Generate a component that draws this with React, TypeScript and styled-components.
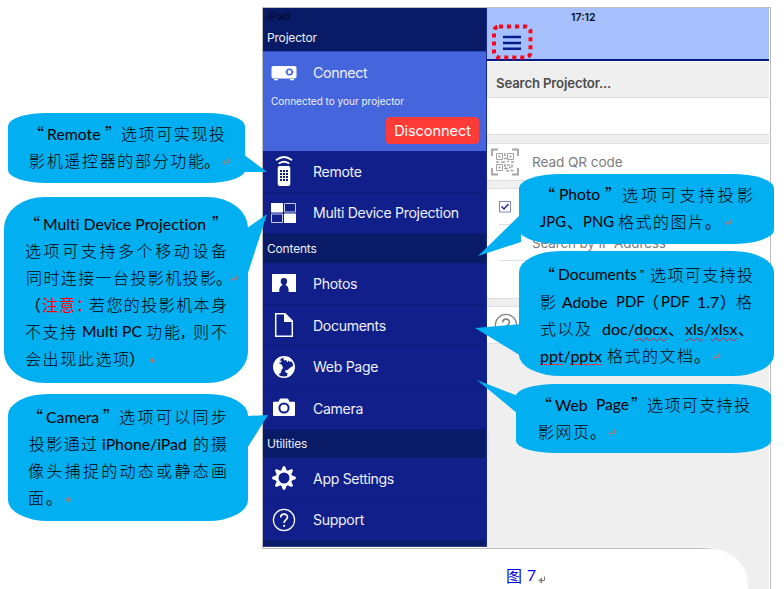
import React from "react";
import styled, { createGlobalStyle } from "styled-components";

const GlobalStyle = createGlobalStyle`
  * { box-sizing: border-box; }
  body { margin: 0; background: #fff; }
`;

const ui = `Inter, "Liberation Sans", sans-serif`;
const cjk = `"Noto Sans CJK SC", sans-serif`;
const latin = `Lato, "Noto Sans CJK SC", sans-serif`;

const Page = styled.main`
  position: relative;
  width: 784px;
  height: 589px;
  overflow: hidden;
  background: #fff;
  padding: 7px 0 0 262px;
  font-family: ${ui};
`;

const Frame = styled.div`
  width: 509px;
  height: 582px;
  display: flex;
  border: solid #bcbcbc;
  border-width: 1px 1px 0 1px;
  padding-right: 1px;
`;

const Sidebar = styled.nav`
  width: 224px;
  height: 539px;
  flex: none;
  overflow: hidden;
  background: #091a66;
  border-right: 1px solid #16289a;
  color: #eef0fb;
`;

const Status = styled.div`
  height: 18px;
  padding: 1px 0 0 5px;
  font-size: 10.5px;
  line-height: 16px;
  color: #02061c;
`;

const Section = styled.div<{ $h: number; $lift?: number }>`
  height: ${(p) => p.$h}px;
  padding: 0 0 ${(p) => p.$lift ?? 0}px 4px;
  display: flex;
  align-items: center;
  font-size: 12px;
  letter-spacing: -0.18px;
`;

const ConnectCard = styled.section`
  height: 100px;
  border-top: 1px solid #2b45b4;
  background: #4565dc;
  display: flex;
  flex-direction: column;
`;

const ConnectTitle = styled.div`
  height: 40px;
  display: flex;
  align-items: center;
  font-size: 14.3px;
  letter-spacing: -0.4px;
`;

const ConnectNote = styled.div`
  height: 18px;
  padding-left: 8px;
  line-height: 18px;
  font-size: 10px;
  white-space: nowrap;
`;

const Disconnect = styled.button`
  align-self: flex-end;
  width: 93px;
  height: 27px;
  margin: 7px 7px 0 0;
  padding: 0;
  border: 0;
  border-radius: 4px;
  background: #ff3b38;
  color: #fff;
  font: 14.6px ${ui};
  letter-spacing: -0.1px;
`;

const Row = styled.div`
  height: 41.6px;
  display: flex;
  align-items: center;
  background: #101f8a;
  border-bottom: 1px solid #0c1b78;
  font-size: 14.1px;
  letter-spacing: -0.33px;
  white-space: nowrap;
`;

const IconBox = styled.span`
  width: 50px;
  flex: none;
  display: flex;
  padding-left: 5px;
  svg { display: block; }
`;

const Panel = styled.section`
  flex: 1;
  background: #efefef;
  color: #7d7d7d;
`;

const TopBar = styled.header`
  height: 53px;
  background: #a6c0fd;
  border-bottom: 2px solid #061a84;
  color: #0a0f24;
`;

const Clock = styled.div`
  padding: 3px 0 0 84px;
  font-size: 10.5px;
  line-height: 13px;
  font-weight: 600;
`;

const MenuIcon = styled.div`
  padding-left: 4px;
  svg { display: block; }
`;

const Heading = styled.h1`
  margin: 0;
  height: 37px;
  padding: 6px 0 0 9px;
  border-top: 1px solid #fff;
  line-height: 30px;
  font-size: 13.2px;
  letter-spacing: -0.16px;
  font-weight: 600;
  color: #4c4c4c;
`;

const Cell = styled.div<{ $h: number; $gap?: number }>`
  height: ${(p) => p.$h}px;
  margin-bottom: ${(p) => p.$gap ?? 0}px;
  display: flex;
  align-items: center;
  background: #fff;
  box-shadow: 0 0 0 1px #dfdfdf;
  clip-path: inset(-1px 0);
  padding-left: 3px;
  font-size: 13.6px;
  letter-spacing: -0.08px;
  svg { flex: none; }
`;

const CellText = styled.span`
  padding-left: 12px;
`;

const SearchGroup = styled.div`
  height: 109px;
  margin-bottom: 9px;
  background: #fff;
  box-shadow: 0 0 0 1px #dfdfdf;
  clip-path: inset(-1px 0);
`;

const CheckRow = styled.div`
  height: 36px;
  margin-left: 12px;
  padding-top: 12px;
  border-bottom: 1px solid #e0e0e0;
  svg { display: block; }
`;

const IpRow = styled(CheckRow)`
  padding: 8px 0 0 33px;
  line-height: 20px;
  font-size: 13.4px;
  letter-spacing: -0.1px;
`;

const Caption = styled.footer`
  position: absolute;
  left: 262px;
  top: 548px;
  width: 485px;
  height: 60px;
  padding: 17px 0 0 244px;
  background: #fff;
  border-top-right-radius: 42px 36px;
  box-shadow: 1px 0 3px #fff;
  color: #0000e6;
  display: flex;
  font: 16px/20px ${cjk};
  &::before {
    content: "";
    position: absolute;
    left: 0;
    top: 0;
    width: 454px;
    height: 1px;
    background: linear-gradient(90deg, #bcbcbc 97%, #efefef);
  }
`;

const CaptionNumber = styled.span`
  padding-left: 5px;
  font-family: Lato, sans-serif;
  font-size: 15.5px;
`;

const Bubble = styled.aside<{ $x: number; $y: number; $w: number; $h: number; $rx: number; $ry: number; $top: number }>`
  position: absolute;
  left: ${(p) => p.$x}px;
  top: ${(p) => p.$y}px;
  width: ${(p) => p.$w}px;
  height: ${(p) => p.$h}px;
  border-radius: ${(p) => p.$rx}px / ${(p) => p.$ry}px;
  padding-top: ${(p) => p.$top}px;
  background: #02aff0;
  color: #000;
`;

const Tail = styled.svg`
  position: absolute;
  left: 0;
  top: 0;
  overflow: visible;
  pointer-events: none;
`;

const Line = styled.div`
  position: relative;
  height: 27px;
  display: flex;
  line-height: 27px;
`;

const Run = styled.span<{ $gap: number; $w: number; $kind: string; $size: number }>`
  flex: none;
  display: block;
  height: 27px;
  width: ${(p) => p.$w}px;
  margin-left: ${(p) => p.$gap}px;
  white-space: ${(p) => (p.$kind === "c" || p.$kind === "r" ? "normal" : "nowrap")};
  text-align-last: ${(p) => (p.$kind === "c" || p.$kind === "r" ? "justify" : "left")};
  font-family: ${(p) => (p.$kind === "l" || p.$kind === "w" || p.$kind === "d" ? latin : cjk)};
  font-size: ${(p) => p.$size}px;
  font-variant-ligatures: none;
  font-weight: ${(p) => (p.$kind === "c" ? 300 : 400)};
  color: ${(p) => (p.$kind === "r" ? "#f00" : "inherit")};
`;

const Misspelt = styled.span<{ $dotted?: boolean }>`
  text-decoration: underline ${(p) => (p.$dotted ? "dotted" : "wavy")} #e0202c 1px;
  text-underline-offset: 2px;
  text-decoration-skip-ink: none;
`;

const ReturnMark = styled.span<{ $gap: number }>`
  margin-left: ${(p) => p.$gap}px;
  padding-top: 11px;
  svg { display: block; }
`;

/* kind: c = Chinese run, r = red Chinese run, q = punctuation, l = Latin,
   w = Latin with wavy underline after the slash, d = dotted underline, m = return mark */
type Seg = [kind: string, x: number, w: number, text: string, size?: number];

type Callout = {
  box: [number, number, number, number];
  r: [number, number];
  top: number;
  tail: string;
  lines: Seg[][];
};

const callouts: Callout[] = [
  {
    box: [8, 113, 237, 70], r: [38, 13], top: 7,
    tail: "235,41 259,59 235,59",
    lines: [
      [["q", 28, 16, "“"], ["l", 47, 55, "Remote", 15.8], ["q", 105, 16, "”"], ["c", 121, 104, "选项可实现投"]],
      [["c", 29, 175, "影机遥控器的部分功能"], ["q", 204, 16, "。"], ["m", 222, 8, ""]],
    ],
  },
  {
    box: [4, 197, 244, 186], r: [41, 31], top: 13,
    tail: "242,32 263,17 242,82",
    lines: [
      [["q", 24, 16, "“"], ["l", 43, 168, "Multi Device Projection", 15.8], ["q", 212, 16, "”"]],
      [["c", 25, 202, "选项可支持多个移动设备"]],
      [["c", 26, 190, "同时连接一台投影机投影"], ["q", 216, 14, "。"], ["m", 230, 8, ""]],
      [["q", 25, 16, "（"], ["r", 42, 50, "注意："], ["c", 89, 138, "若您的投影机本身"]],
      [["c", 25, 51, "不支持"], ["l", 82, 61, "Multi PC", 15.6], ["c", 146, 34, "功能"], ["q", 180, 13, "，", 13], ["c", 193, 34, "则不"]],
      [["c", 25, 104, "会出现此选项"], ["q", 129, 16, "）"], ["m", 149, 8, ""]],
    ],
  },
  {
    box: [8, 394, 240, 127], r: [40, 21], top: 9,
    tail: "238,22 260,21 238,56",
    lines: [
      [["q", 27, 16, "“"], ["l", 46, 55, "Camera", 15.8], ["q", 103, 16, "”"], ["c", 119, 108, "选项可以同步"]],
      [["c", 29, 68, "投影通过"], ["l", 102, 86, "iPhone/iPad", 15.8], ["c", 193, 34, "的摄"]],
      [["c", 28, 199, "像头捕捉的动态或静态画"]],
      [["c", 28, 16, "面"], ["q", 46, 16, "。"], ["m", 65, 8, ""]],
    ],
  },
  {
    box: [519, 174, 255, 70], r: [42, 14], top: 7,
    tail: "2,40 -41,82 2,68",
    lines: [
      [["q", 539, 16, "“"], ["l", 559, 42, "Photo", 15.6], ["q", 605, 16, "”"], ["c", 622, 131, "选项可支持投影"]],
      [["l", 540, 26, "JPG", 14.8], ["q", 567, 16, "、"], ["l", 583, 32, "PNG", 14.8], ["c", 618, 86, "格式的图片"], ["q", 705, 16, "。"], ["m", 724, 8, ""]],
    ],
  },
  {
    box: [519, 251, 255, 125], r: [42, 21], top: 10,
    tail: "2,73 -44,77 2,105",
    lines: [
      [["q", 539, 16, "“"], ["l", 558, 81, "Documents", 15.6], ["q", 640, 10, "”", 10], ["c", 650, 103, "选项可支持投"]],
      [["c", 540, 17, "影"], ["l", 562, 46, "Adobe", 15.8], ["l", 616, 27, "PDF", 14.8], ["q", 643, 16, "（"], ["l", 661, 27, "PDF", 14.8], ["l", 697, 22, "1.7", 15.8], ["q", 720, 16, "）"], ["c", 736, 17, "格"]],
      [["c", 540, 51, "式以及"], ["w", 602, 66, "doc/docx"], ["q", 668, 16, "、"], ["w", 685, 52, "xls/xlsx"], ["q", 738, 16, "、"]],
      [["d", 540, 65, "ppt/pptx"], ["c", 607, 86, "格式的文档"], ["q", 694, 16, "。"], ["m", 712, 8, ""]],
    ],
  },
  {
    box: [516, 384, 255, 69], r: [40, 12], top: 7,
    tail: "2,12 -39,-4 2,30",
    lines: [
      [["q", 536, 16, "“"], ["l", 555, 32, "Web", 15.8], ["l", 596, 34, "Page", 15.6], ["q", 631, 16, "”"], ["c", 647, 103, "选项可支持投"]],
      [["c", 538, 51, "影网页"], ["q", 590, 16, "。"], ["m", 608, 8, ""]],
    ],
  },
];

function ReturnArrow({ color = "#a08078" }: { color?: string }) {
  return (
    <svg width="8" height="8" viewBox="0 0 8 8" fill="none" stroke={color}>
      <path d="M6.5 0.5v4H1.5M3.5 2v5L1 4.5z" />
    </svg>
  );
}

function RunText({ kind, text }: { kind: string; text: string }) {
  if (kind === "w") {
    const [a, b] = text.split("/");
    return a === "doc" ? <>{a}/<Misspelt>{b}</Misspelt></> : <><Misspelt>{a}</Misspelt>/<Misspelt>{b}</Misspelt></>;
  }
  if (kind === "d") {
    const [a, b] = text.split("/");
    return <><Misspelt $dotted>{a}</Misspelt>/<Misspelt $dotted>{b}</Misspelt></>;
  }
  return <>{text}</>;
}

function CalloutBubble({ c }: { c: Callout }) {
  const [x, y, w, h] = c.box;
  return (
    <Bubble $x={x} $y={y} $w={w} $h={h} $rx={c.r[0]} $ry={c.r[1]} $top={c.top}>
      <Tail width={w} height={h}><polygon points={c.tail} fill="#02aff0" /></Tail>
      {c.lines.map((line, i) => {
        let cursor = x;
        return (
          <Line key={i}>
            {line.map(([kind, sx, sw, text, size], j) => {
              const gap = sx - cursor;
              cursor = sx + sw;
              if (kind === "m") return <ReturnMark key={j} $gap={gap}><ReturnArrow /></ReturnMark>;
              return (
                <Run key={j} $gap={gap} $w={sw} $kind={kind} $size={size ?? 16}>
                  <RunText kind={kind} text={text} />
                </Run>
              );
            })}
          </Line>
        );
      })}
    </Bubble>
  );
}

const ProjectorIcon = () => (
  <svg width="32" height="20" viewBox="0 0 32 20">
    <rect x="3.500" y="4" width="25" height="12.500" rx="2" fill="#fff" />
    <path d="M6 17h4v1.300H6zM22 17h4v1.300h-4z" fill="#fff" />
    <circle cx="21.500" cy="10" r="2.700" fill="#fff" stroke="#4565dc" strokeWidth="1.600" />
    <path d="M17.300 10h1.500M24.200 10h1.500" stroke="#4565dc" />
  </svg>
);

const RemoteIcon = () => (
  <svg width="32" height="32" viewBox="0 0 32 32">
    <rect x="9.700" y="11" width="12.600" height="20" rx="2" fill="#fff" />
    <g fill="none" stroke="#fff" strokeWidth="1.800" strokeLinecap="round">
      <path d="M8.600 4.700Q16 -0.700 23.400 4.700M11.400 8.300Q16 5.200 20.600 8.300" />
    </g>
    <g fill="#101f8a">
      {[15, 18, 21, 24].map((y) => [12, 15, 18].map((x) => <rect key={`${x}-${y}`} x={x} y={y} width="2" height="2" />))}
    </g>
  </svg>
);

const MultiIcon = () => (
  <svg width="32" height="22" viewBox="0 0 32 22">
    <path d="M3 1h12v9.500H3zM16 11.500h12V21H16z" fill="#fff" />
    <path d="M16.500 1.500h11v8.500h-11zM3.500 12h11v8.500h-11z" fill="none" stroke="#c6cbec" />
  </svg>
);

const PhotosIcon = () => (
  <svg width="32" height="20" viewBox="0 0 32 20">
    <path d="M4 1h24v18H4z" fill="#fff" />
    <path d="M11.300 19c0-4.500.8-6 3.400-7-1.400-1-2-2-2-3.700a3.200 3.200 0 0 1 6.400 0c0 1.700-.6 2.700-1.700 3.700 2.500 1 3.300 2.500 3.300 7z" fill="#101f8a" />
  </svg>
);

const DocumentIcon = () => (
  <svg width="32" height="26" viewBox="0 0 32 26">
    <path d="M7.700 1.700h9.300l7.300 7.300v15.300H7.700z" fill="none" stroke="#fff" strokeWidth="1.500" />
    <path d="M16 1.500v8.500h8.500z" fill="#fff" />
  </svg>
);

const GlobeIcon = () => (
  <svg width="32" height="24" viewBox="0 0 32 24">
    <circle cx="16" cy="12" r="10.200" fill="#101f8a" stroke="#fff" strokeWidth="1.500" />
    <path d="M6 9 8 5l4-3 2 1.200-2.500 2 2.500.8-1.500 1.500-2 .3 3.500 2.200 1 3-1.500 2-.5 2.500-2.300 2 .3 2L7.500 18.500 6 14z" fill="#fff" />
    <path d="M15 2.200 21 3l3 3-2 1-1.500-1.500-1 2-1.500-2.500-2 .5zM26 10.500l-3 1.500-3.500 3-2.500.5.500 2 2 .5-.5 3.500 4-2 2.500-3.500z" fill="#fff" />
  </svg>
);

const CameraIcon = () => (
  <svg width="32" height="22" viewBox="0 0 32 22">
    <path d="M6 4.700h4.500l1.300-2.600q.4-.6 1-.6h6.400q.6 0 1 .6l1.300 2.600H26q1 0 1 1V18q0 1-1 1H6q-1 0-1-1V5.700q0-1 1-1z" fill="#fff" />
    <circle cx="16" cy="11" r="4.600" fill="#fff" stroke="#101f8a" strokeWidth="2" />
  </svg>
);

const GearIcon = () => (
  <svg width="32" height="26" viewBox="0 0 32 26">
    <g fill="#fff">
      {[0, 45, 90, 135, 180, 225, 270, 315].map((a) => (
        <path key={a} d="M12.800 6.500 15 1.200h2l2.200 5.300z" transform={`rotate(${a} 16 13)`} />
      ))}
    </g>
    <circle cx="16" cy="13" r="6.800" fill="#101f8a" stroke="#fff" strokeWidth="2.600" />
  </svg>
);

const HelpIcon = ({ color = "#fff" }: { color?: string }) => (
  <svg width="32" height="26" viewBox="0 0 32 26">
    <circle cx="16" cy="13" r="10.600" fill="none" stroke={color} strokeWidth="1.200" />
    <path d="M12.700 10.500c0-4.500 6.800-4.300 6.800-.4 0 2.800-3.400 2.800-3.400 6" fill="none" stroke={color} strokeWidth="1.600" />
    <circle cx="16.100" cy="18.800" r="1.100" fill={color} />
  </svg>
);

const Hamburger = () => (
  <svg width="42" height="37" viewBox="0 0 42 37">
    <rect x="3" y="2.500" width="36.500" height="31" rx="5" fill="none" stroke="#fa0519" strokeWidth="4" strokeDasharray="4 4" />
    <path d="M12 13h18M12 19h18M12 24.700h18" stroke="#071b8c" strokeWidth="2.400" />
  </svg>
);

const QrIcon = () => (
  <svg width="30" height="28" viewBox="0 0 30 28" fill="none" stroke="#a4a4a4">
    <path d="M2 8V1.500h6M22 1.500h6V8M2 20v6.500h6M22 26.500h6V20" strokeWidth="1.800" />
    <path d="M6.500 5.500h6v6h-6zM17.500 5.500h6v6h-6zM6.500 16.500h6v6h-6z" />
    <path d="M8.500 8.500h2M19.500 8.500h2M8.500 19.500h2" strokeWidth="2" />
    <path d="M15 5v3M14 10.500h3M6 14h3M11 14h4M17 13.500h2M21 14h3M15 16v3M17 17h3M22 16.500v3M14 20.500h4M19 19.500h2M16 23h3M20.500 22.500h3" strokeWidth="1.600" />
  </svg>
);

const CheckIcon = () => (
  <svg width="12" height="12" viewBox="0 0 12 12" fill="none">
    <rect x=".5" y=".5" width="11" height="10.500" stroke="#8288b5" />
    <path d="M2.500 5.500 5 8l4.500-5" stroke="#1d2b90" strokeWidth="1.500" />
  </svg>
);

function MenuRow({ icon, label }: { icon: React.ReactNode; label: string }) {
  return <Row><IconBox>{icon}</IconBox>{label}</Row>;
}

export default function App() {
  return (
    <Page>
      <GlobalStyle />
      <Frame>
        <Sidebar>
          <Status>iPad</Status>
          <Section $h={25} $lift={2}>Projector</Section>
          <ConnectCard>
            <ConnectTitle><IconBox><ProjectorIcon /></IconBox>Connect</ConnectTitle>
            <ConnectNote>Connected to your projector</ConnectNote>
            <Disconnect>Disconnect</Disconnect>
          </ConnectCard>
          <MenuRow icon={<RemoteIcon />} label="Remote" />
          <MenuRow icon={<MultiIcon />} label="Multi Device Projection" />
          <Section $h={29}>Contents</Section>
          <MenuRow icon={<PhotosIcon />} label="Photos" />
          <MenuRow icon={<DocumentIcon />} label="Documents" />
          <MenuRow icon={<GlobeIcon />} label="Web Page" />
          <MenuRow icon={<CameraIcon />} label="Camera" />
          <Section $h={28.5}>Utilities</Section>
          <MenuRow icon={<GearIcon />} label="App Settings" />
          <MenuRow icon={<HelpIcon />} label="Support" />
        </Sidebar>
        <Panel>
          <TopBar>
            <Clock>17:12</Clock>
            <MenuIcon><Hamburger /></MenuIcon>
          </TopBar>
          <Heading>Search Projector...</Heading>
          <Cell $h={36} $gap={10} />
          <Cell $h={36} $gap={9}><QrIcon /><CellText>Read QR code</CellText></Cell>
          <SearchGroup>
            <CheckRow><CheckIcon /></CheckRow>
            <CheckRow as={IpRow}>Search by IP Address</CheckRow>
          </SearchGroup>
          <Cell $h={36}><HelpIcon color="#858585" /></Cell>
        </Panel>
      </Frame>
      <Caption>
        图<CaptionNumber>7</CaptionNumber>
        <ReturnMark $gap={2}><ReturnArrow color="#777" /></ReturnMark>
      </Caption>
      {callouts.map((c, i) => <CalloutBubble key={i} c={c} />)}
    </Page>
  );
}
